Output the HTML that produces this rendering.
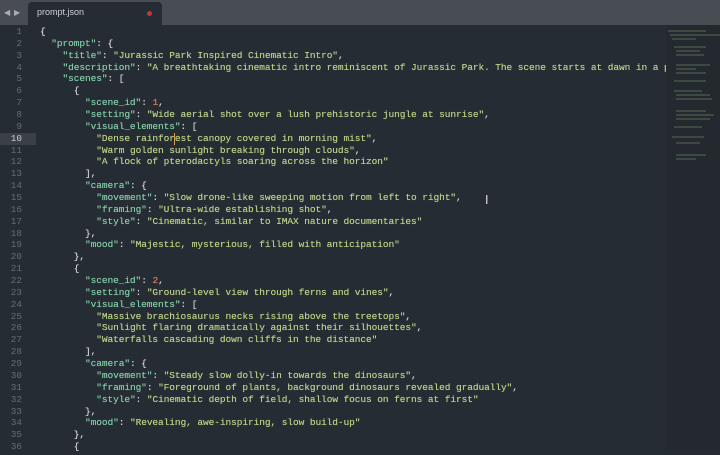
<!DOCTYPE html>
<html><head><style>
body{margin:0;width:720px;height:450px;overflow:hidden;background:#262c33;font-family:"Liberation Mono",monospace;}
#tabs{position:absolute;left:0;top:0;width:720px;height:25px;background:#484d53;}
#tab{position:absolute;left:28px;top:2px;width:134px;height:23px;background:#262c33;border-radius:4px 4px 0 0;}
#tab span{position:absolute;left:9px;top:5px;font:9px "Liberation Sans",sans-serif;color:#d0d3d6;}
#tab i{position:absolute;left:119px;top:9px;width:5px;height:5px;border-radius:50%;background:#c8323c;}
.arr{position:absolute;top:8px;color:#aab;font-size:8px;font-family:"DejaVu Sans",sans-serif;}
#gut{position:absolute;left:0;top:26px;width:22px;text-align:right;font-size:9.35px;line-height:11.86px;color:#666d75;white-space:pre;}
#hl{position:absolute;left:0;top:132.7px;width:36px;height:11.86px;background:#3a4048;}
#code{position:absolute;left:40px;top:26px;font-size:9.5px;line-height:11.86px;color:#d0d3d6;white-space:pre;letter-spacing:-0.08px;text-shadow:0 0 0.4px currentColor;}
.k{color:#80cca6}.s{color:#b8d086}.n{color:#e0785a}
#mm{position:absolute;left:666px;top:25px;width:54px;height:425px;background:#23292f;}
#cur{position:absolute;left:174px;top:133px;width:1px;height:12px;background:#e0a040;}
#ib{position:absolute;left:485px;top:193px;color:#ddd;font-size:12px;font-family:"DejaVu Sans",sans-serif;}
</style></head><body>
<div id="tabs"><span class="arr" style="left:4px">◀</span><span class="arr" style="left:14px">▶</span><div id="tab"><span>prompt.json</span><i></i></div></div>
<div id="hl"></div>
<div id="gut">1
2
3
4
5
6
7
8
9
<span style="color:#c8ccd0">10</span>
11
12
13
14
15
16
17
18
19
20
21
22
23
24
25
26
27
28
29
30
31
32
33
34
35
36</div>
<div id="code">{
  <span class="k">"prompt"</span>: {
    <span class="k">"title"</span>: <span class="s">"Jurassic Park Inspired Cinematic Intro"</span>,
    <span class="k">"description"</span>: <span class="s">"A breathtaking cinematic intro reminiscent of Jurassic Park. The scene starts at dawn in a pr</span>
    <span class="k">"scenes"</span>: [
      {
        <span class="k">"scene_id"</span>: <span class="n">1</span>,
        <span class="k">"setting"</span>: <span class="s">"Wide aerial shot over a lush prehistoric jungle at sunrise"</span>,
        <span class="k">"visual_elements"</span>: [
          <span class="s">"Dense rainforest canopy covered in morning mist"</span>,
          <span class="s">"Warm golden sunlight breaking through clouds"</span>,
          <span class="s">"A flock of pterodactyls soaring across the horizon"</span>
        ],
        <span class="k">"camera"</span>: {
          <span class="k">"movement"</span>: <span class="s">"Slow drone-like sweeping motion from left to right"</span>,
          <span class="k">"framing"</span>: <span class="s">"Ultra-wide establishing shot"</span>,
          <span class="k">"style"</span>: <span class="s">"Cinematic, similar to IMAX nature documentaries"</span>
        },
        <span class="k">"mood"</span>: <span class="s">"Majestic, mysterious, filled with anticipation"</span>
      },
      {
        <span class="k">"scene_id"</span>: <span class="n">2</span>,
        <span class="k">"setting"</span>: <span class="s">"Ground-level view through ferns and vines"</span>,
        <span class="k">"visual_elements"</span>: [
          <span class="s">"Massive brachiosaurus necks rising above the treetops"</span>,
          <span class="s">"Sunlight flaring dramatically against their silhouettes"</span>,
          <span class="s">"Waterfalls cascading down cliffs in the distance"</span>
        ],
        <span class="k">"camera"</span>: {
          <span class="k">"movement"</span>: <span class="s">"Steady slow dolly-in towards the dinosaurs"</span>,
          <span class="k">"framing"</span>: <span class="s">"Foreground of plants, background dinosaurs revealed gradually"</span>,
          <span class="k">"style"</span>: <span class="s">"Cinematic depth of field, shallow focus on ferns at first"</span>
        },
        <span class="k">"mood"</span>: <span class="s">"Revealing, awe-inspiring, slow build-up"</span>
      },
      {</div>
<div id="cur"></div>
<div id="mm"><svg width="54" height="425"><g stroke="#7a9a70" stroke-width="1" opacity="0.6">
<line x1="2" y1="6" x2="40" y2="6"/><line x1="4" y1="10" x2="54" y2="10"/><line x1="6" y1="14" x2="30" y2="14"/><line x1="8" y1="22" x2="40" y2="22"/><line x1="10" y1="26" x2="34" y2="26"/><line x1="10" y1="30" x2="38" y2="30"/><line x1="10" y1="40" x2="44" y2="40"/><line x1="10" y1="44" x2="30" y2="44"/><line x1="10" y1="48" x2="40" y2="48"/><line x1="8" y1="56" x2="40" y2="56"/><line x1="8" y1="66" x2="36" y2="66"/><line x1="10" y1="70" x2="44" y2="70"/><line x1="10" y1="74" x2="46" y2="74"/><line x1="10" y1="86" x2="40" y2="86"/><line x1="10" y1="90" x2="48" y2="90"/><line x1="10" y1="94" x2="44" y2="94"/><line x1="8" y1="102" x2="36" y2="102"/><line x1="6" y1="112" x2="38" y2="112"/><line x1="10" y1="118" x2="34" y2="118"/><line x1="10" y1="130" x2="40" y2="130"/><line x1="10" y1="134" x2="30" y2="134"/></g></svg></div>
<div id="ib">I</div>
</body></html>
